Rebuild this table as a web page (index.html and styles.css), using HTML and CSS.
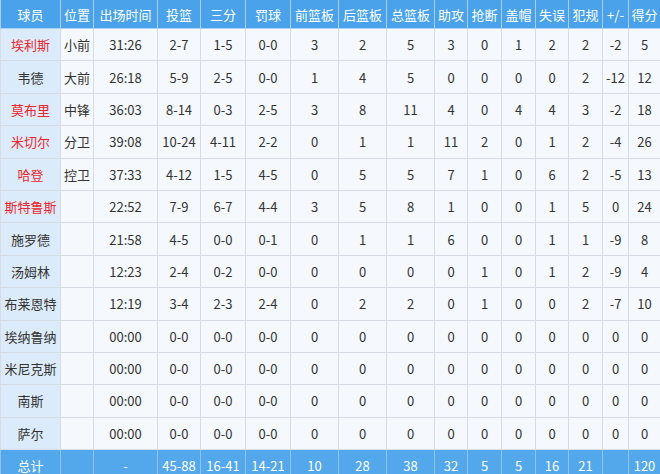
FILE: index.html
```html
<!DOCTYPE html>
<html>
<head>
<meta charset="utf-8">
<link rel="stylesheet" href="styles.css">
</head>
<body>
<table class="stats">
<colgroup>
<col class="c-name"><col class="c-pos"><col class="c-time"><col class="c-fg"><col class="c-3p"><col class="c-ft"><col class="c-reb"><col class="c-reb"><col class="c-reb"><col class="c-sm"><col class="c-sm2"><col class="c-sm2"><col class="c-sm"><col class="c-sm2"><col class="c-pm"><col class="c-pts">
</colgroup>
<thead>
<tr><th>球员</th><th>位置</th><th>出场时间</th><th>投篮</th><th>三分</th><th>罚球</th><th>前篮板</th><th>后篮板</th><th>总篮板</th><th>助攻</th><th>抢断</th><th>盖帽</th><th>失误</th><th>犯规</th><th>+/-</th><th>得分</th></tr>
</thead>
<tbody>
<tr><td class="name red">埃利斯</td><td>小前</td><td>31:26</td><td>2-7</td><td>1-5</td><td>0-0</td><td>3</td><td>2</td><td>5</td><td>3</td><td>0</td><td>1</td><td>2</td><td>2</td><td>-2</td><td>5</td></tr>
<tr><td class="name">韦德</td><td>大前</td><td>26:18</td><td>5-9</td><td>2-5</td><td>0-0</td><td>1</td><td>4</td><td>5</td><td>0</td><td>0</td><td>0</td><td>0</td><td>2</td><td>-12</td><td>12</td></tr>
<tr><td class="name red">莫布里</td><td>中锋</td><td>36:03</td><td>8-14</td><td>0-3</td><td>2-5</td><td>3</td><td>8</td><td>11</td><td>4</td><td>0</td><td>4</td><td>4</td><td>3</td><td>-2</td><td>18</td></tr>
<tr><td class="name red">米切尔</td><td>分卫</td><td>39:08</td><td>10-24</td><td>4-11</td><td>2-2</td><td>0</td><td>1</td><td>1</td><td>11</td><td>2</td><td>0</td><td>1</td><td>2</td><td>-4</td><td>26</td></tr>
<tr><td class="name red">哈登</td><td>控卫</td><td>37:33</td><td>4-12</td><td>1-5</td><td>4-5</td><td>0</td><td>5</td><td>5</td><td>7</td><td>1</td><td>0</td><td>6</td><td>2</td><td>-5</td><td>13</td></tr>
<tr><td class="name red">斯特鲁斯</td><td></td><td>22:52</td><td>7-9</td><td>6-7</td><td>4-4</td><td>3</td><td>5</td><td>8</td><td>1</td><td>0</td><td>0</td><td>1</td><td>5</td><td>0</td><td>24</td></tr>
<tr><td class="name">施罗德</td><td></td><td>21:58</td><td>4-5</td><td>0-0</td><td>0-1</td><td>0</td><td>1</td><td>1</td><td>6</td><td>0</td><td>0</td><td>1</td><td>1</td><td>-9</td><td>8</td></tr>
<tr><td class="name">汤姆林</td><td></td><td>12:23</td><td>2-4</td><td>0-2</td><td>0-0</td><td>0</td><td>0</td><td>0</td><td>0</td><td>1</td><td>0</td><td>1</td><td>2</td><td>-9</td><td>4</td></tr>
<tr><td class="name">布莱恩特</td><td></td><td>12:19</td><td>3-4</td><td>2-3</td><td>2-4</td><td>0</td><td>2</td><td>2</td><td>0</td><td>1</td><td>0</td><td>0</td><td>2</td><td>-7</td><td>10</td></tr>
<tr><td class="name">埃纳鲁纳</td><td></td><td>00:00</td><td>0-0</td><td>0-0</td><td>0-0</td><td>0</td><td>0</td><td>0</td><td>0</td><td>0</td><td>0</td><td>0</td><td>0</td><td>0</td><td>0</td></tr>
<tr><td class="name">米尼克斯</td><td></td><td>00:00</td><td>0-0</td><td>0-0</td><td>0-0</td><td>0</td><td>0</td><td>0</td><td>0</td><td>0</td><td>0</td><td>0</td><td>0</td><td>0</td><td>0</td></tr>
<tr><td class="name">南斯</td><td></td><td>00:00</td><td>0-0</td><td>0-0</td><td>0-0</td><td>0</td><td>0</td><td>0</td><td>0</td><td>0</td><td>0</td><td>0</td><td>0</td><td>0</td><td>0</td></tr>
<tr><td class="name">萨尔</td><td></td><td>00:00</td><td>0-0</td><td>0-0</td><td>0-0</td><td>0</td><td>0</td><td>0</td><td>0</td><td>0</td><td>0</td><td>0</td><td>0</td><td>0</td><td>0</td></tr>
</tbody>
<tfoot>
<tr><td>总计</td><td></td><td>-</td><td>45-88</td><td>16-41</td><td>14-21</td><td>10</td><td>28</td><td>38</td><td>32</td><td>5</td><td>5</td><td>16</td><td>21</td><td></td><td>120</td></tr>
</tfoot>
</table>
</body>
</html>
```

FILE: styles.css
```css
html, body {
  margin: 0;
  padding: 0;
  background: #ffffff;
}

.stats {
  width: 660px;
  table-layout: fixed;
  border-collapse: collapse;
  font-family: "Noto Sans CJK SC", "Microsoft YaHei", sans-serif;
  font-size: 13px;
  color: #333333;
}

.c-name { width: 60px; }
.c-pos { width: 33px; }
.c-time { width: 64px; }
.c-fg { width: 43px; }
.c-3p { width: 45px; }
.c-ft { width: 45px; }
.c-reb { width: 48px; }
.c-sm { width: 33px; }
.c-sm2 { width: 34px; }
.c-pm { width: 26px; }
.c-pts { width: 32px; }

.stats th,
.stats td {
  padding: 0;
  text-align: center;
  white-space: nowrap;
  overflow: hidden;
}

.stats thead th {
  height: 28px;
  background: #4aa3ea;
  color: #ffffff;
  font-weight: normal;
  border: 1px solid #a9d1f3;
  border-top: none;
}

.stats tbody td {
  height: 31.4px;
  background: #f5f9fd;
  border: 1px solid #d5dce5;
}

.stats tbody td.name {
  background: #dcebfa;
}

.stats td.red {
  color: #e8262d;
}

.stats tfoot td {
  height: 30px;
  background: #53a8ec;
  color: #ffffff;
  border: 1px solid #8cc4f2;
  border-bottom: none;
}
```
